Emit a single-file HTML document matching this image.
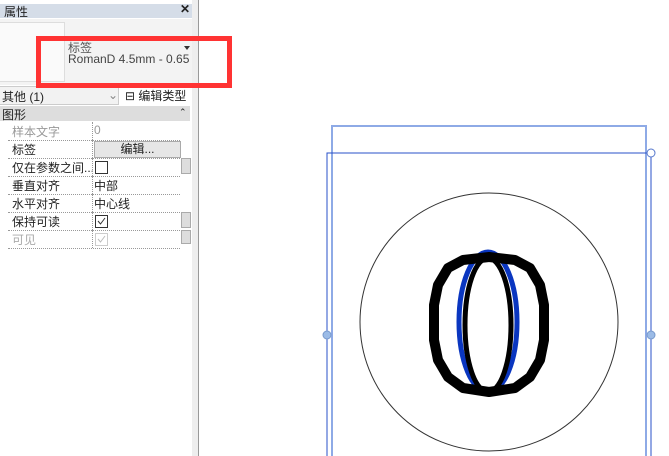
<!DOCTYPE html>
<html><head><meta charset="utf-8"><style>
body{margin:0;width:669px;height:456px;overflow:hidden;background:#fff;position:relative;font-family:"Liberation Sans","Noto Sans CJK SC",sans-serif;font-size:12px;color:#222}
.a{position:absolute}
.row{position:absolute;left:8px;width:172px;height:18px;border-bottom:1px dotted #999}
.row span{position:absolute;top:1px}
.row .v{left:86px}
.row:after{content:"";position:absolute;left:84px;top:0;height:18px;border-left:1px dotted #999}
.cb{position:absolute;left:87px;top:3px;width:11px;height:11px;border:1px solid #333;background:#fff}
</style></head><body>
<div class="a" style="left:0;top:4px;width:192px;height:14px;background:#d5dde8"></div>
<div class="a" style="left:4px;top:3px;font-size:12px;">属性</div>
<div class="a" style="left:180px;top:2px;font-size:12px;font-weight:bold">✕</div>
<div class="a" style="left:0;top:19px;width:192px;height:66px;background:#f3f3f3"></div>
<div class="a" style="left:0;top:22px;width:64px;height:58px;border:1px solid #ddd;border-left:none;background:#fafafa"></div>
<div class="a" style="left:68px;top:39px;color:#555">标签</div>
<div class="a" style="left:68px;top:52px;color:#444;font-size:12px">RomanD 4.5mm - 0.65</div>
<div class="a" style="left:184px;top:46px;width:0;height:0;border-left:3px solid transparent;border-right:3px solid transparent;border-top:4px solid #333"></div>
<div class="a" style="left:0;top:86px;width:118px;height:17px;border:1px solid #ccc;border-left:none;background:#f2f2f2"></div>
<div class="a" style="left:2px;top:88px">其他 (1)</div>
<div class="a" style="left:108px;top:88px;color:#888">⌄</div>
<div class="a" style="left:125px;top:87px">⊟ 编辑类型</div>
<div class="a" style="left:0;top:106px;width:190px;height:15px;background:#ddd"></div>
<div class="a" style="left:2px;top:106px">图形</div>
<div class="a" style="left:179px;top:107px;font-size:9px">⌃</div>
<div class="row" style="top:122px"><span style="left:4px;color:#999">样本文字</span><span class="v" style="color:#999">0</span></div>
<div class="row" style="top:140px"><span style="left:4px">标签</span></div>
<div class="a" style="left:94px;top:141px;width:85px;height:15px;background:#e6e6e6;border:1px solid #aaa;text-align:center;line-height:15px">编辑...</div>
<div class="row" style="top:158px"><span style="left:4px">仅在参数之间...</span><div class="cb"></div></div>
<div class="row" style="top:176px"><span style="left:4px">垂直对齐</span><span class="v">中部</span></div>
<div class="row" style="top:194px"><span style="left:4px">水平对齐</span><span class="v">中心线</span></div>
<div class="row" style="top:212px"><span style="left:4px">保持可读</span><div class="cb"><svg width="11" height="11" style="position:absolute;left:0;top:0"><path d="M2,5 L4.5,8 L9,2" fill="none" stroke="#333" stroke-width="1"/></svg></div></div>
<div class="row" style="top:230px"><span style="left:4px;color:#aaa">可见</span><div class="cb" style="border-color:#ccc"><svg width="11" height="11" style="position:absolute;left:0;top:0"><path d="M2,5 L4.5,8 L9,2" fill="none" stroke="#bbb" stroke-width="1"/></svg></div></div>
<div class="a" style="left:181px;top:158px;width:8px;height:14px;background:#ddd;border:1px solid #aaa"></div>
<div class="a" style="left:181px;top:212px;width:8px;height:14px;background:#ddd;border:1px solid #aaa"></div>
<div class="a" style="left:181px;top:230px;width:8px;height:12px;background:#ddd;border:1px solid #aaa"></div>
<div class="a" style="left:192px;top:0;width:6px;height:456px;background:#eee;border-right:1px solid #999"></div>
<div class="a" style="left:36px;top:36px;width:186px;height:42px;border:5px solid #f33"></div>
<svg class="a" style="left:0;top:0" width="669" height="456">
<rect x="332" y="126" width="314" height="340" fill="none" stroke="#8eaae6" stroke-width="2"/>
<polyline points="327,460 327,153 651,153 651,460" fill="none" stroke="#2850c8" stroke-width="1"/>
<circle cx="651" cy="153" r="4" fill="#fff" stroke="#5577cc"/>
<circle cx="489" cy="322" r="129" fill="none" stroke="#333" stroke-width="1"/>
<ellipse cx="488" cy="322" rx="29" ry="70" fill="none" stroke="#0a36c0" stroke-width="5"/>
<polygon points="489,257 515,260 530,268 540,285 544,305 544,340 540,360 530,377 515,388 489,392 463,388 448,377 438,360 434,340 434,305 438,285 448,268 463,260" fill="none" stroke="#000" stroke-width="10" stroke-linejoin="round"/>
<ellipse cx="488" cy="325" rx="23" ry="67" fill="none" stroke="#000" stroke-width="5"/>
<circle cx="327" cy="335" r="4" fill="#9bbbe6" stroke="#7799cc"/>
<circle cx="651" cy="335" r="4" fill="#9bbbe6" stroke="#7799cc"/>
</svg>
</body></html>
